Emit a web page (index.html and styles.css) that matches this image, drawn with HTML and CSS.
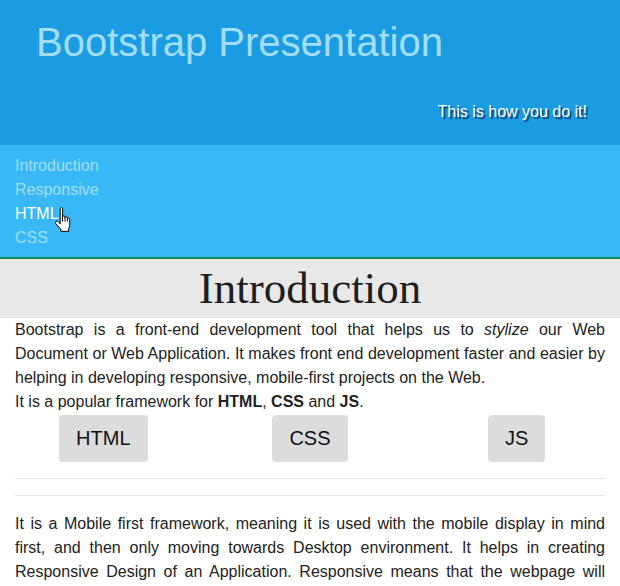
FILE: index.html
```html
<!DOCTYPE html>
<html>
<head>
<meta charset="utf-8">
<link rel="stylesheet" href="styles.css">
</head>
<body>
<header class="banner">
  <h1 class="banner-title">Bootstrap Presentation</h1>
  <p class="banner-sub">This is how you do it!</p>
</header>
<nav class="nav">
  <a class="nav-link" href="#">Introduction</a>
  <a class="nav-link" href="#">Responsive</a>
  <a class="nav-link nav-link-hover" href="#">HTML</a>
  <a class="nav-link" href="#">CSS</a>
  <svg class="cursor" width="20" height="26" viewBox="0 0 18 24">
    <path d="M5.5 1.8 C5.5 0.9 6 0.5 6.6 0.5 C7.2 0.5 7.7 0.9 7.7 1.8 V9 C7.9 8.4 8.3 8.1 8.9 8.1 C9.5 8.1 9.9 8.5 9.9 9.1 V10 C10.1 9.4 10.5 9.1 11.1 9.1 C11.7 9.1 12.1 9.5 12.1 10.1 V11 C12.3 10.4 12.7 10.2 13.2 10.2 C13.8 10.2 14.3 10.6 14.3 11.3 V17 C14.3 18 13.8 19 13.3 20 V22.5 H6 V20.5 L1.6 15.5 C1 14.8 1 13.9 1.6 13.4 C2.2 12.9 3 13 3.6 13.6 L5.5 15.5 Z" fill="#fff" stroke="#000" stroke-width="0.9" stroke-linejoin="round"/>
    <path d="M7.7 9 V13.5 M9.9 10 V13.5 M12.1 11 V13.5" stroke="#000" stroke-width="0.9" fill="none"/>
  </svg>
</nav>
<main class="content">
  <section class="section">
    <h2 class="section-title">Introduction</h2>
    <div class="section-body">
      <p class="text">Bootstrap is a front-end development tool that helps us to <em>stylize</em> our Web Document or Web Application. It makes front end development faster and easier by helping in developing responsive, mobile-first projects on the Web.<br>It is a popular framework for <strong>HTML</strong>, <strong>CSS</strong> and <strong>JS</strong>.</p>
      <div class="btn-row">
        <div class="btn-col"><span class="tag-btn">HTML</span></div>
        <div class="btn-col"><span class="tag-btn">CSS</span></div>
        <div class="btn-col"><span class="tag-btn">JS</span></div>
      </div>
      <hr class="rule">
      <hr class="rule">
      <p class="text">It is a Mobile first framework, meaning it is used with the mobile display in mind first, and then only moving towards Desktop environment. It helps in creating Responsive Design of an Application. Responsive means that the webpage will adjust itself according to the screen size of the device it is being viewed on.</p>
    </div>
  </section>
</main>
</body>
</html>
```
FILE: styles.css
```css
html, body {
  margin: 0;
  padding: 0;
}
body {
  font-family: "Liberation Sans", Arial, sans-serif;
  font-size: 16px;
  line-height: 24px;
  color: #222;
  background: #fff;
}
.banner {
  background: #1b9ce2;
  height: 145px;
  box-sizing: border-box;
  padding: 19px 33px 0 36px;
}
.banner-title {
  margin: 0;
  font-weight: normal;
  font-size: 40px;
  line-height: 46px;
  color: #a3def8;
}
.banner-sub {
  margin: 37px 0 0 0;
  text-align: right;
  color: #fff;
  font-size: 16px;
  line-height: 20px;
  text-shadow: 2px 2px 1px #0d3a66;
}
.nav {
  position: relative;
  background: #38b8f4;
  padding: 9px 15px 7px;
  display: flex;
  flex-direction: column;
  align-items: flex-start;
  border-bottom: 2px solid #128a5a;
}
.nav-link {
  color: #a3def8;
  text-decoration: none;
  line-height: 24px;
}
.nav-link-hover {
  color: #fff;
}
.cursor {
  position: absolute;
  left: 54px;
  top: 62px;
}
.section-title {
  margin: 0;
  background: #e8e8e8;
  text-align: center;
  font-family: "Liberation Serif", "Times New Roman", serif;
  font-weight: normal;
  font-size: 45px;
  line-height: 59px;
  color: #1e1e1e;
}
.section-body {
  padding: 0 15px;
}
.text {
  margin: 0;
  text-align: justify;
}
.btn-row {
  display: grid;
  grid-template-columns: 1fr 1fr 1fr;
  margin: 1px -15px 0;
}
.btn-col {
  display: flex;
  justify-content: center;
}
.tag-btn {
  display: inline-block;
  background: #dcdcdc;
  border-radius: 4px;
  padding: 10px 17px;
  font-size: 20px;
  line-height: 27px;
  color: #111;
}
.rule {
  margin: 16px 0;
  border: 0;
  border-top: 1px solid #e6e6e6;
  height: 0;
}
```
